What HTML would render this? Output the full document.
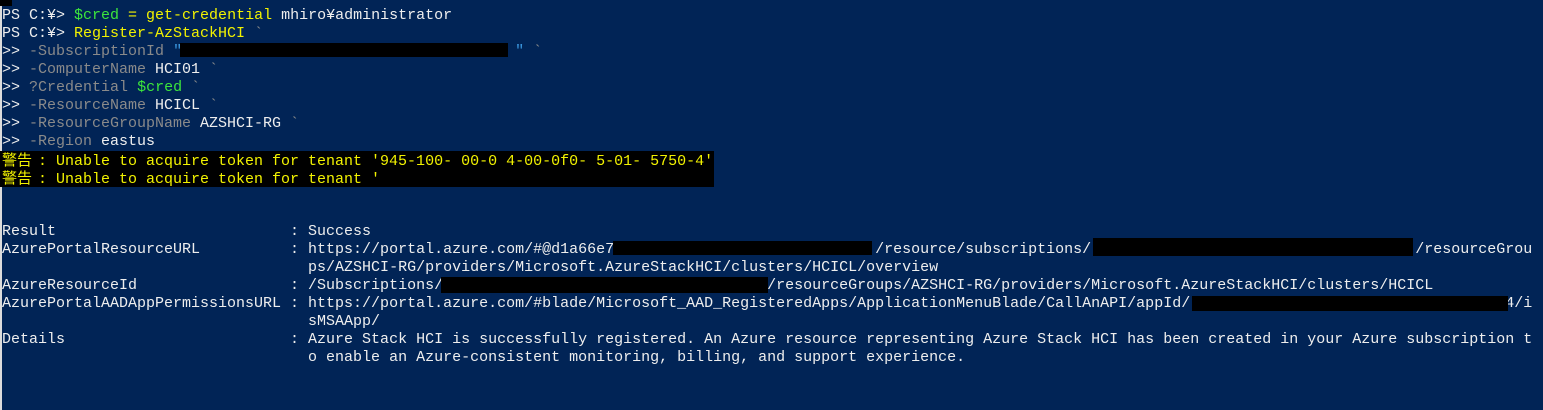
<!DOCTYPE html><html><head><meta charset="utf-8"><style>
html,body{margin:0;padding:0}
body{width:1543px;height:410px;background:#012456;position:relative;overflow:hidden;font-family:"Liberation Mono","Noto Sans CJK JP",monospace;font-size:15px;color:#eeeeee}
.l{position:absolute;left:2px;height:18px;line-height:18px;white-space:pre}
.g{color:#8a8a8a}.y{color:#f2f200}.gr{color:#3ce63c}
.b{position:absolute;background:#000}
.k{display:inline-block;width:36px;font-family:"Noto Sans CJK JP",sans-serif;font-size:15px}
</style></head><body>
<div style="position:absolute;left:0;top:0;width:2px;height:410px;background:#dcdcdc"></div>
<div class="b" style="left:0;top:0;width:12px;height:6px"></div>
<div class="b" style="left:0;top:151px;width:714px;height:36px"></div>
<div class="l" style="top:7px">PS C:¥&gt; <span class="gr">$cred</span> <span class="y">= get-credential</span> mhiro¥administrator</div>
<div class="l" style="top:25px">PS C:¥&gt; <span class="y">Register-AzStackHCI</span> <span class="g">`</span></div>
<div class="l" style="top:43px">&gt;&gt; <span class="g">-SubscriptionId</span> <span style="color:#3a96dd">"                                     "</span> <span class="g">`</span></div>
<div class="b" style="left:180px;top:43px;width:328px;height:14px"></div>
<div class="l" style="top:61px">&gt;&gt; <span class="g">-ComputerName</span> HCI01 <span class="g">`</span></div>
<div class="l" style="top:79px">&gt;&gt; <span class="g">?Credential</span> <span class="gr">$cred</span> <span class="g">`</span></div>
<div class="l" style="top:97px">&gt;&gt; <span class="g">-ResourceName</span> HCICL <span class="g">`</span></div>
<div class="l" style="top:115px">&gt;&gt; <span class="g">-ResourceGroupName</span> AZSHCI-RG <span class="g">`</span></div>
<div class="l" style="top:133px">&gt;&gt; <span class="g">-Region</span> eastus</div>
<div class="l y" style="top:151px"><span class="k">警告</span>: Unable to acquire token for tenant '945-100- 00-0 4-00-0f0- 5-01- 5750-4'</div>
<div class="l y" style="top:169px"><span class="k">警告</span>: Unable to acquire token for tenant '</div>
<div class="l" style="top:223px">Result                          : Success</div>
<div class="l" style="top:241px">AzurePortalResourceURL          : https://portal.azure.com/#@d1a66e7                             /resource/subscriptions/                                    /resourceGrou</div>
<div class="b" style="left:613px;top:241px;width:259px;height:14px"></div>
<div class="b" style="left:1093px;top:238px;width:320px;height:18px"></div>
<div class="l" style="top:259px">                                  ps/AZSHCI-RG/providers/Microsoft.AzureStackHCI/clusters/HCICL/overview</div>
<div class="l" style="top:277px">AzureResourceId                 : /Subscriptions/                                    /resourceGroups/AZSHCI-RG/providers/Microsoft.AzureStackHCI/clusters/HCICL</div>
<div class="b" style="left:441px;top:277px;width:327px;height:16px"></div>
<div class="l" style="top:295px">AzurePortalAADAppPermissionsURL : https://portal.azure.com/#blade/Microsoft_AAD_RegisteredApps/ApplicationMenuBlade/CallAnAPI/appId/                                   4/i</div>
<div class="b" style="left:1192px;top:296px;width:316px;height:15px"></div>
<div class="l" style="top:313px">                                  sMSAApp/</div>
<div class="l" style="top:331px">Details                         : Azure Stack HCI is successfully registered. An Azure resource representing Azure Stack HCI has been created in your Azure subscription t</div>
<div class="l" style="top:349px">                                  o enable an Azure-consistent monitoring, billing, and support experience.</div>
</body></html>
